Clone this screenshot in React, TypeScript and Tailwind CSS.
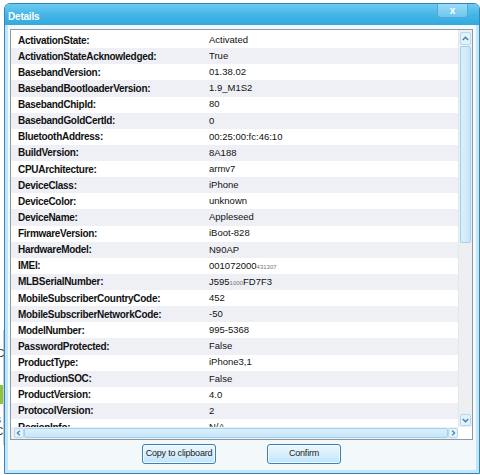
import React from "react";

type Row = { label: string; value: string; hidden?: [string, string] };

const rows: Row[] = [
  { label: "ActivationState", value: "Activated" },
  { label: "ActivationStateAcknowledged", value: "True" },
  { label: "BasebandVersion", value: "01.38.02" },
  { label: "BasebandBootloaderVersion", value: "1.9_M1S2" },
  { label: "BasebandChipId", value: "80" },
  { label: "BasebandGoldCertId", value: "0" },
  { label: "BluetoothAddress", value: "00:25:00:fc:46:10" },
  { label: "BuildVersion", value: "8A188" },
  { label: "CPUArchitecture", value: "armv7" },
  { label: "DeviceClass", value: "iPhone" },
  { label: "DeviceColor", value: "unknown" },
  { label: "DeviceName", value: "Appleseed" },
  { label: "FirmwareVersion", value: "iBoot-828" },
  { label: "HardwareModel", value: "N90AP" },
  { label: "IMEI", value: "001072000", hidden: ["431307", ""] },
  { label: "MLBSerialNumber", value: "J595", hidden: ["1000", "FD7F3"] },
  { label: "MobileSubscriberCountryCode", value: "452" },
  { label: "MobileSubscriberNetworkCode", value: "-50" },
  { label: "ModelNumber", value: "995-5368" },
  { label: "PasswordProtected", value: "False" },
  { label: "ProductType", value: "iPhone3,1" },
  { label: "ProductionSOC", value: "False" },
  { label: "ProductVersion", value: "4.0" },
  { label: "ProtocolVersion", value: "2" },
  { label: "RegionInfo", value: "N/A" },
];

const Chevron = ({ dir }: { dir: "up" | "down" | "left" | "right" }) => {
  const d = {
    up: "M2 6 L5 3 L8 6",
    down: "M2 4 L5 7 L8 4",
    left: "M6 2 L3 5 L6 8",
    right: "M4 2 L7 5 L4 8",
  }[dir];
  return (
    <svg width="10" height="10" viewBox="0 0 10 10">
      <path d={d} fill="none" stroke="#3d7fbf" strokeWidth="1.6" />
    </svg>
  );
};

// bits of the window behind the dialog
const LeftEdge = () => {
  return (
    <div className="flex w-[4px] flex-col overflow-hidden text-[10px] leading-none text-[#333]">
      <div className="h-[327px]" />
      <div className="flex flex-1 flex-col border-r border-[#c9ced3]">
        <div className="h-[19px]" />
        <span className="h-[18px] -ml-[3px]">C</span>
        <span className="h-[18px] -ml-[4px] font-bold">r</span>
        <div className="h-[19px] bg-[#8cc63f]" />
        <div className="h-[11px]" />
        <span className="h-[12px] -ml-[4px]">s</span>
        <span className="h-[12px] -ml-[4px]">C</span>
      </div>
      <div className="h-[30px]" />
    </div>
  );
};

const Button = ({ children }: { children: React.ReactNode }) => {
  return (
    <button className="flex h-[20px] w-[74px] items-center justify-center whitespace-nowrap rounded-[3px] border border-[#3c7fb1] bg-gradient-to-b from-[#eef7fd] via-[#d9effc] to-[#bfe3f9] text-[9px] tracking-[-0.2px] text-[#1b1b1b] shadow-[inset_0_0_0_1px_#f3faff]">
      {children}
    </button>
  );
};

export default function App() {
  return (
    <div className="flex h-[475px] w-[480px] overflow-hidden bg-white pt-[3px] font-['Liberation_Sans',Arial,sans-serif]">
      <LeftEdge />
      <div className="flex h-[471px] w-[476px] flex-col rounded-t-[6px] border border-[#2f86b9] bg-[#c4e5f6]">
        {/* Title bar */}
        <div className="flex h-[21px] items-start justify-between rounded-t-[5px] bg-gradient-to-b from-[#6ccaf0] via-[#44b6e6] to-[#34a8de] pl-[3px] pr-[11px]">
          <span className="pt-[5px] text-[10px] font-bold tracking-[-0.2px] text-white">Details</span>
          <div className="flex h-[14px] w-[31px] items-center justify-center rounded-b-[4px] border border-t-0 border-[#52a9d9] bg-gradient-to-b from-[#9adcf7] to-[#6cc6ee] text-[10px] font-bold leading-none text-white">
            x
          </div>
        </div>

        {/* Client area */}
        <div className="mx-[3px] mb-[3px] flex flex-1 flex-col bg-[#f3f8fb] pl-[2px] pr-[3px] pt-[4px]">
          <div className="flex h-[411px] flex-col border border-[#8c9aaa] bg-white">
            <div className="flex h-[397px]">
              <div className="flex-1 overflow-hidden pt-[2px]">
                {rows.map((row, i) => (
                  <div
                    key={row.label}
                    className={`flex h-[16.13px] items-center pl-[7px] text-[9.5px] text-[#111] ${
                      i % 2 === 1 ? "bg-[#eff0f6]" : "bg-white"
                    }`}
                  >
                    <span className="w-[191px] shrink-0 text-[10px] font-bold tracking-[-0.3px]">{row.label}:</span>
                    <span>
                      {row.value}
                      {row.hidden && (
                        <>
                          <span className="text-[6px] text-[#777]">{row.hidden[0]}</span>
                          {row.hidden[1]}
                        </>
                      )}
                    </span>
                  </div>
                ))}
              </div>

              {/* Vertical scrollbar */}
              <div className="flex w-[14px] flex-col border-l border-[#e3e8ec] bg-[#eeeff0] px-[1px] pt-[2px]">
                <div className="flex h-[13px] items-center justify-center rounded-[2px] border border-[#b6d7ee] bg-[#e4f2fb]">
                  <Chevron dir="up" />
                </div>
                <div className="mt-[1px] h-[197px] rounded-[2px] border border-[#a3d0ee] bg-gradient-to-r from-[#dcf0fb] to-[#c6e5f8]" />
                <div className="flex-1" />
                <div className="mb-[1px] flex h-[12px] items-center justify-center rounded-[2px] border border-[#b6d7ee] bg-[#e4f2fb]">
                  <Chevron dir="down" />
                </div>
              </div>
            </div>

            {/* Horizontal scrollbar */}
            <div className="flex h-[12px]">
              <div className="flex flex-1 items-stretch bg-[#eeeff0] py-[1px] pl-[3px]">
                <div className="flex w-[10px] items-center justify-center rounded-[2px] border border-[#b6d7ee] bg-[#e4f2fb]">
                  <Chevron dir="left" />
                </div>
                <div className="flex-1 rounded-[2px] border border-[#a3d0ee] bg-gradient-to-b from-[#dcf0fb] to-[#c6e5f8]" />
                <div className="flex w-[10px] items-center justify-center rounded-[2px] border border-[#b6d7ee] bg-[#e4f2fb]">
                  <Chevron dir="right" />
                </div>
              </div>
              <div className="w-[14px] bg-white" />
            </div>
          </div>

          {/* Buttons */}
          <div className="flex flex-1 items-center justify-center gap-[51px] pb-[2px]">
            <Button>Copy to clipboard</Button>
            <Button>Confirm</Button>
          </div>
        </div>
      </div>
    </div>
  );
}
